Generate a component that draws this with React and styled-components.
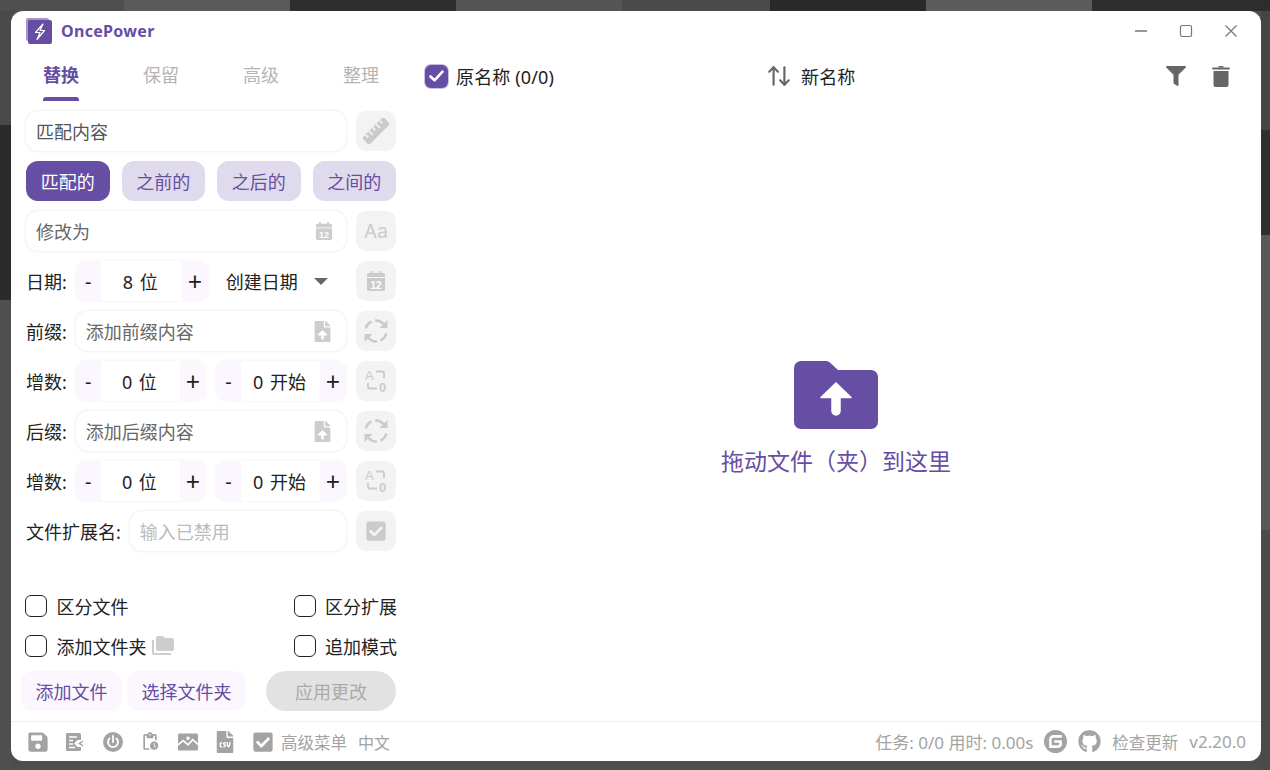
import React from "react";
import styled, { createGlobalStyle } from "styled-components";
import { ArrowUpDown } from "lucide-react";
import {
  FaFileUpload,
  FaCheckSquare,
  FaSave,
  FaFileCsv,
  FaGithub,
  FaFilter,
} from "react-icons/fa";
import { MdFolderCopy, MdPendingActions } from "react-icons/md";
import { SiGitee } from "react-icons/si";

const PURPLE = "#654ea3";

const GlobalStyle = createGlobalStyle`
  * { box-sizing: border-box; }
  html, body { margin: 0; height: 100%; }
  body {
    width: 1270px;
    height: 770px;
    overflow: hidden;
    padding: 11px 9px 9px 11px;
    font-family: "Noto Sans", "Noto Sans CJK SC", sans-serif;
    background-color: #4d4d4d;
    /* photo wall behind the window, only its edges show */
    background-image:
      linear-gradient(90deg, #4f4f4f 0 124px, #5a5a5a 124px 290px, #2e2e2e 290px 456px, #555 456px 622px, #4a4a4a 622px 770px, #292929 770px 926px, #5c5c5c 926px 1092px, #2d2d2d 1092px 1270px),
      linear-gradient(180deg, #4a4a4a 0 125px, #2b2b2b 125px 300px, #4f4f4f 300px 770px),
      linear-gradient(180deg, #454545 0 130px, #2f2f2f 130px 235px, #595959 235px 530px, #4b4b4b 530px 770px);
    background-size: 100% 11px, 11px 100%, 9px 100%;
    background-position: 0 0, 0 0, 100% 0;
    background-repeat: no-repeat;
  }
`;

const Window = styled.div`
  width: 1250px;
  height: 750px;
  background: #fff;
  border-radius: 12px;
  display: flex;
  flex-direction: column;
  overflow: hidden;
`;

const TitleBar = styled.header`
  height: 40px;
  flex: none;
  display: flex;
  align-items: center;
  padding: 0 8px 0 15px;
`;

const AppName = styled.span`
  margin-left: 9px;
  font-size: 16px;
  font-weight: 700;
  letter-spacing: 0.3px;
  color: ${PURPLE};
`;

const WindowControls = styled.div`
  margin-left: auto;
  display: flex;
  align-items: center;
`;

const ControlButton = styled.button`
  width: 45px;
  height: 40px;
  padding: 0;
  border: 0;
  background: none;
  display: flex;
  align-items: center;
  justify-content: center;
  color: #777;
`;

const Body = styled.div`
  flex: 1;
  min-height: 0;
  display: grid;
  grid-template-columns: 400px 1fr;
`;

const Sidebar = styled.aside`
  display: flex;
  flex-direction: column;
  min-height: 0;
`;

const Tabs = styled.nav`
  height: 50px;
  flex: none;
  display: grid;
  grid-template-columns: repeat(4, 100px);
`;

const Tab = styled.div`
  position: relative;
  display: flex;
  justify-content: center;
  padding-top: 11px;
  font-size: 18px;
  line-height: 26px;
  font-weight: ${(p) => (p.$active ? 700 : 400)};
  color: ${(p) => (p.$active ? PURPLE : "#b4b4b4")};

  ${(p) =>
    p.$active &&
    `&::after {
      content: "";
      position: absolute;
      left: 32px;
      right: 32px;
      bottom: 0;
      height: 4px;
      border-radius: 3px 3px 0 0;
      background: ${PURPLE};
    }`}
`;

const Form = styled.div`
  display: flex;
  flex-direction: column;
  gap: 10px;
  padding: 10px 15px 0;
`;

const Row = styled.div`
  display: flex;
  align-items: center;
  gap: 10px;
  height: 40px;
`;

const Label = styled.span`
  flex: none;
  margin-right: -1px;
  font-size: 18px;
  color: #222;
  white-space: nowrap;
`;

const Field = styled.div`
  flex: 1;
  min-width: 0;
  height: 40px;
  display: flex;
  align-items: center;
  justify-content: space-between;
  padding: 0 13px 0 10px;
  border-radius: 12px;
  background: #fff;
  box-shadow: 0 0 3px rgba(0, 0, 0, 0.13);
  font-size: 18px;
  color: ${(p) => p.$color || "#666"};
`;

const SquareButton = styled.button`
  flex: none;
  width: 40px;
  height: 40px;
  padding: 0;
  border: 0;
  border-radius: 10px;
  background: #f3f3f3;
  color: #cbcbcb;
  display: flex;
  align-items: center;
  justify-content: center;
  font-family: "Inter", sans-serif;
  font-size: 19px;
  font-weight: 400;
`;

const Segments = styled.div`
  display: grid;
  grid-template-columns: repeat(4, 1fr);
  gap: 12px;
`;

const Segment = styled.button`
  height: 40px;
  padding: 0;
  border: 0;
  border-radius: 12px;
  font-family: inherit;
  font-size: 18px;
  background: ${(p) => (p.$active ? PURPLE : "#e0dbec")};
  color: ${(p) => (p.$active ? "#fff" : PURPLE)};
`;

const Stepper = styled.div`
  flex: ${(p) => (p.$fixed ? "0 0 132px" : "1")};
  height: 40px;
  display: grid;
  grid-template-columns: 25px 1fr 26px;
  align-items: stretch;
  border-radius: 10px;
  overflow: hidden;
  box-shadow: 0 0 3px rgba(0, 0, 0, 0.07);
  font-size: 18px;
  color: #222;
`;

const StepSign = styled.span`
  display: flex;
  align-items: center;
  justify-content: center;
  background: #fcf6fe;
  font-size: ${(p) => (p.$plus ? 25 : 20)}px;
`;

const StepValue = styled.span`
  display: flex;
  align-items: center;
  justify-content: center;
  padding-right: 2px;
  word-spacing: 2px;
`;

const DateSelect = styled.div`
  flex: 1;
  display: flex;
  align-items: center;
  justify-content: space-between;
  padding: 0 18px 0 8px;
  font-size: 18px;
  color: #222;
`;

const Caret = styled.span`
  width: 0;
  height: 0;
  border-left: 7px solid transparent;
  border-right: 7px solid transparent;
  border-top: 7px solid #666;
`;

const Options = styled.div`
  margin-top: 40px;
  padding: 0 14px;
  display: grid;
  grid-template-columns: 1fr auto;
  row-gap: 10px;
`;

const Option = styled.label`
  display: flex;
  align-items: center;
  gap: 9.5px;
  height: 30px;
  font-size: 18px;
  color: #222;
  white-space: nowrap;
`;

const CheckBox = styled.span`
  flex: none;
  width: 22px;
  height: 22px;
  border: 1.5px solid #222;
  border-radius: 6px;
  background: #fff;
`;

const TinyIcon = styled.span`
  display: flex;
  margin-left: -5px;
  color: #cdcdcd;
`;

const Actions = styled.div`
  display: flex;
  align-items: center;
  gap: 5px;
  margin-top: 10px;
  padding: 0 15px 0 10px;
`;

const LightButton = styled.button`
  width: ${(p) => p.$width}px;
  height: 40px;
  padding: 0;
  border: 0;
  border-radius: 12px;
  background: #fcf6fe;
  color: ${PURPLE};
  font-family: inherit;
  font-size: 18px;
`;

const ApplyButton = styled.button`
  margin-left: auto;
  width: 130px;
  height: 40px;
  padding: 0;
  border: 0;
  border-radius: 20px;
  background: #e2e2e2;
  color: #aaa;
  font-family: inherit;
  font-size: 18px;
`;

const Content = styled.main`
  display: flex;
  flex-direction: column;
  min-height: 0;
`;

const ListHeader = styled.div`
  height: 50px;
  flex: none;
  display: grid;
  grid-template-columns: 341px 1fr auto;
  align-items: center;
  padding: 0 31px 0 14px;
  font-size: 18px;
  letter-spacing: 0.15px;
  color: #222;
`;

const HeaderCell = styled.div`
  display: flex;
  align-items: center;
  gap: ${(p) => p.$gap || 8}px;
`;

const CheckedBox = styled.span`
  flex: none;
  width: 23px;
  height: 23px;
  border-radius: 6px;
  background: ${PURPLE};
  box-shadow: 0 0 0 1px #c9bfe0;
  display: flex;
  align-items: center;
  justify-content: center;
`;

const HeaderIcons = styled.div`
  display: flex;
  align-items: center;
  gap: 26px;
  color: #666;
`;

const DropZone = styled.div`
  flex: 1;
  display: flex;
  flex-direction: column;
  align-items: center;
  justify-content: center;
  gap: 15px;
  padding-top: 16px;
  color: ${PURPLE};
  font-size: 23px;
  line-height: 34px;
`;

const Footer = styled.footer`
  height: 40px;
  flex: none;
  display: flex;
  align-items: center;
  padding: 0 15px 0 16.5px;
  border-top: 1px solid #f1f1f1;
  color: #a3a3a3;
  font-size: 16px;
`;

const FooterIcons = styled.div`
  display: flex;
  align-items: center;
  gap: 17.5px;
  margin-right: 8.5px;
`;

const FooterIcon = styled.span`
  width: 20px;
  height: 20px;
  display: flex;
  align-items: center;
  justify-content: center;
`;

const FooterText = styled.span`
  margin-left: ${(p) => p.$gap || 0}px;
  font-size: ${(p) => p.$size || 16.5}px;
  white-space: nowrap;
`;

const FooterRight = styled.div`
  margin-left: auto;
  display: flex;
  align-items: center;
  gap: 11px;
`;

const Logo = () => (
  <svg width="26" height="26" viewBox="0 0 26 26">
    <rect x="0" y="0" width="23" height="23" rx="2" fill="#a597c8" />
    <rect x="2" y="2" width="24" height="24" rx="2" fill={PURPLE} />
    <path
      d="M17 6 9.500 14.500h4.500L11 21.500l7.500-9h-4.500z"
      fill="none"
      stroke="#fff"
      strokeWidth="1.200"
      strokeLinejoin="round"
    />
  </svg>
);

const RulerIcon = () => (
  <svg width="26" height="26" viewBox="0 0 26 26">
    <g transform="rotate(-45 13 13)">
      <rect x="-2" y="8" width="30" height="10" rx="1.500" fill="currentColor" />
      <path d="M3 8v4M8 8v5.500M13 8v4M18 8v5.500M23 8v4" stroke="#f3f3f3" strokeWidth="1.800" />
    </g>
  </svg>
);

const CalendarIcon = ({ size = 20 }) => (
  <svg width={size} height={size} viewBox="0 0 20 20" fill="currentColor">
    <rect x="4.500" y="0" width="2" height="3" />
    <rect x="13.500" y="0" width="2" height="3" />
    <path d="M1 4a2 2 0 0 1 2-2h14a2 2 0 0 1 2 2v2H1z" />
    <path d="M1 7h18v11a2 2 0 0 1-2 2H3a2 2 0 0 1-2-2z" />
    <text x="10" y="17.500" textAnchor="middle" fontSize="10" fontWeight="700" fontFamily="Liberation Sans" fill="#fff">
      12
    </text>
  </svg>
);

const RefreshIcon = () => (
  <svg width="26" height="26" viewBox="0 0 26 26" fill="none" stroke="currentColor" strokeWidth="2.600">
    <path d="M2.800 10.500A10.500 10.500 0 0 1 8.500 3.500" />
    <path d="M12 2.500A10.500 10.500 0 0 1 20.500 6" />
    <path d="M23.300 15.500A10.500 10.500 0 0 1 17.500 22.500" />
    <path d="M14 23.500A10.500 10.500 0 0 1 5.500 20" />
    <path d="M24.500 2v8h-8z" fill="currentColor" stroke="none" />
    <path d="M1.500 24v-8h8z" fill="currentColor" stroke="none" />
  </svg>
);

const AutoNumberIcon = () => (
  <svg width="23" height="26" viewBox="0 0 23 26" fill="none" stroke="currentColor" strokeWidth="1.800">
    <text x="0" y="12" fontSize="13" fontFamily="Liberation Sans" fill="currentColor" stroke="none">
      A
    </text>
    <path d="M11 3.500h6a2 2 0 0 1 2 2V10" />
    <path d="M3 15v3.500a2 2 0 0 0 2 2h7" />
    <text x="14" y="24" fontSize="13" fontWeight="700" fontFamily="Liberation Sans" fill="currentColor" stroke="none">
      0
    </text>
  </svg>
);

const LogListIcon = () => (
  <svg width="18" height="20" viewBox="0 0 18 20" fill="currentColor">
    <path d="M1.500 1h12A1.500 1.500 0 0 1 15 2.500V8h-3.500L8 11.500 11.500 15H15v2.500A1.500 1.500 0 0 1 13.500 19h-12A1.500 1.500 0 0 1 0 17.500v-15A1.500 1.500 0 0 1 1.500 1z" />
    <path d="M3 5h8M3 8.500h4M3 12h4M3 15.500h6" stroke="#fff" strokeWidth="1.500" />
    <path d="M17 9l-3.500 2.500L17 14" fill="none" stroke="currentColor" strokeWidth="1.500" />
  </svg>
);

const PowerIcon = () => (
  <svg width="20" height="20" viewBox="0 0 20 20">
    <circle cx="10" cy="10" r="10" fill="currentColor" />
    <path d="M6.500 6.500a5 5 0 1 0 7 0" fill="none" stroke="#fff" strokeWidth="1.800" strokeLinecap="round" />
    <path d="M10 4v6" stroke="#fff" strokeWidth="1.800" strokeLinecap="round" />
  </svg>
);

const PictureIcon = () => (
  <svg width="21" height="18" viewBox="0 0 21 18">
    <rect width="21" height="18" rx="1.500" fill="currentColor" />
    <path d="M0 12l5.500-4.500 5 4.500 5-5.500 5.500 5" fill="none" stroke="#fff" strokeWidth="1.800" />
    <circle cx="10.500" cy="5" r="1.800" fill="#fff" />
  </svg>
);

const TrashIcon = () => (
  <svg width="18" height="22" viewBox="0 0 18 22" fill="currentColor">
    <path d="M1 3.500h16" stroke="currentColor" strokeWidth="1.800" strokeLinecap="round" />
    <path d="M6 2.500 7 1h4l1 1.500z" />
    <path d="M1.500 6h15v13.500a2.500 2.500 0 0 1-2.500 2.500H4a2.500 2.500 0 0 1-2.500-2.500z" />
  </svg>
);

const FolderUploadIcon = () => (
  <svg width="84" height="68" viewBox="0 0 84 68">
    <path
      d="M7 0h25a6 6 0 0 1 4.200 1.700L44 9h33a7 7 0 0 1 7 7v45a7 7 0 0 1-7 7H7a7 7 0 0 1-7-7V7a7 7 0 0 1 7-7z"
      fill={PURPLE}
    />
    <path d="M42 22 27 36.500h11V50a4 4 0 0 0 8 0V36.500h11z" fill="#fff" stroke="#fff" strokeWidth="1.500" strokeLinejoin="round" />
  </svg>
);

const WindowIcon = ({ children }) => (
  <svg width="16" height="16" viewBox="0 0 16 16" fill="none" stroke="currentColor" strokeWidth="1.200">
    {children}
  </svg>
);

function Counter({ value, fixed }) {
  return (
    <Stepper $fixed={fixed}>
      <StepSign>-</StepSign>
      <StepValue>{value}</StepValue>
      <StepSign $plus>+</StepSign>
    </Stepper>
  );
}

export default function App() {
  return (
    <Window>
      <GlobalStyle />
      <TitleBar>
        <Logo />
        <AppName>OncePower</AppName>
        <WindowControls>
          <ControlButton>
            <WindowIcon>
              <path d="M2 8h12" strokeWidth="1.400" />
            </WindowIcon>
          </ControlButton>
          <ControlButton>
            <WindowIcon>
              <rect x="2.500" y="2.500" width="11" height="11" rx="1.500" />
            </WindowIcon>
          </ControlButton>
          <ControlButton>
            <WindowIcon>
              <path d="M2.500 2.500l11 11M13.500 2.500l-11 11" />
            </WindowIcon>
          </ControlButton>
        </WindowControls>
      </TitleBar>

      <Body>
        <Sidebar>
          <Tabs>
            <Tab $active>替换</Tab>
            <Tab>保留</Tab>
            <Tab>高级</Tab>
            <Tab>整理</Tab>
          </Tabs>

          <Form>
            <Row>
              <Field $color="#555">匹配内容</Field>
              <SquareButton>
                <RulerIcon />
              </SquareButton>
            </Row>
            <Segments>
              <Segment $active>匹配的</Segment>
              <Segment>之前的</Segment>
              <Segment>之后的</Segment>
              <Segment>之间的</Segment>
            </Segments>
            <Row>
              <Field>
                修改为
                <TinyIcon>
                  <CalendarIcon size={18} />
                </TinyIcon>
              </Field>
              <SquareButton>Aa</SquareButton>
            </Row>
            <Row>
              <Label>日期:</Label>
              <Counter value="8 位" fixed />
              <DateSelect>
                创建日期
                <Caret />
              </DateSelect>
              <SquareButton>
                <CalendarIcon />
              </SquareButton>
            </Row>
            <Row>
              <Label>前缀:</Label>
              <Field>
                添加前缀内容
                <TinyIcon>
                  <FaFileUpload size={21} />
                </TinyIcon>
              </Field>
              <SquareButton>
                <RefreshIcon />
              </SquareButton>
            </Row>
            <Row>
              <Label>增数:</Label>
              <Counter value="0 位" />
              <Counter value="0 开始" />
              <SquareButton>
                <AutoNumberIcon />
              </SquareButton>
            </Row>
            <Row>
              <Label>后缀:</Label>
              <Field>
                添加后缀内容
                <TinyIcon>
                  <FaFileUpload size={21} />
                </TinyIcon>
              </Field>
              <SquareButton>
                <RefreshIcon />
              </SquareButton>
            </Row>
            <Row>
              <Label>增数:</Label>
              <Counter value="0 位" />
              <Counter value="0 开始" />
              <SquareButton>
                <AutoNumberIcon />
              </SquareButton>
            </Row>
            <Row>
              <Label>文件扩展名:</Label>
              <Field $color="#bbb">输入已禁用</Field>
              <SquareButton>
                <FaCheckSquare size={22} />
              </SquareButton>
            </Row>
          </Form>

          <Options>
            <Option>
              <CheckBox />
              区分文件
            </Option>
            <Option>
              <CheckBox />
              区分扩展
            </Option>
            <Option>
              <CheckBox />
              添加文件夹
              <TinyIcon>
                <MdFolderCopy size={24} />
              </TinyIcon>
            </Option>
            <Option>
              <CheckBox />
              追加模式
            </Option>
          </Options>

          <Actions>
            <LightButton $width={101}>添加文件</LightButton>
            <LightButton $width={119}>选择文件夹</LightButton>
            <ApplyButton>应用更改</ApplyButton>
          </Actions>
        </Sidebar>

        <Content>
          <ListHeader>
            <HeaderCell>
              <CheckedBox>
                <svg width="15" height="12" viewBox="0 0 15 12" fill="none" stroke="#fff" strokeWidth="2.600" strokeLinecap="round" strokeLinejoin="round">
                  <path d="M1.500 6.500 5.500 10.300 13.500 1.700" />
                </svg>
              </CheckedBox>
              原名称 (0/0)
            </HeaderCell>
            <HeaderCell $gap={9}>
              <ArrowUpDown size={26} color="#666" strokeWidth={2} />
              新名称
            </HeaderCell>
            <HeaderIcons>
              <FaFilter size={20} />
              <TrashIcon />
            </HeaderIcons>
          </ListHeader>
          <DropZone>
            <FolderUploadIcon />
            拖动文件（夹）到这里
          </DropZone>
        </Content>
      </Body>

      <Footer>
        <FooterIcons>
          <FooterIcon>
            <FaSave size={22} />
          </FooterIcon>
          <FooterIcon>
            <LogListIcon />
          </FooterIcon>
          <FooterIcon>
            <PowerIcon />
          </FooterIcon>
          <FooterIcon>
            <MdPendingActions size={25} />
          </FooterIcon>
          <FooterIcon>
            <PictureIcon />
          </FooterIcon>
          <FooterIcon>
            <FaFileCsv size={22} />
          </FooterIcon>
          <FooterIcon>
            <FaCheckSquare size={22} />
          </FooterIcon>
        </FooterIcons>
        <FooterText>高级菜单</FooterText>
        <FooterText $gap={11} $size={16}>中文</FooterText>
        <FooterRight>
          <FooterText $size={17}>任务: 0/0 用时: 0.00s</FooterText>
          <SiGitee size={23} />
          <FaGithub size={23} />
          <FooterText>检查更新</FooterText>
          <FooterText $size={17}>v2.20.0</FooterText>
        </FooterRight>
      </Footer>
    </Window>
  );
}
